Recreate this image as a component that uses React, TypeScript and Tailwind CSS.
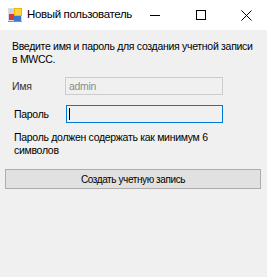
import React from "react";

export default function App() {
  return (
    <div className="w-[267px] h-[277px] bg-[#f0f0f0] flex flex-col overflow-hidden" style={{ fontFamily: '"Liberation Sans", Arial, sans-serif' }}>
      <div className="h-[30px] bg-white flex items-center shrink-0">
        <svg className="ml-[8px] w-[14px] h-[14px] shrink-0" viewBox="0 0 14 14">
          <rect x="0" y="0" width="14" height="14" fill="#d8dce6" />
          <rect x="1" y="1" width="5" height="5" fill="#c9d3e6" />
          <rect x="6" y="0" width="8" height="8" fill="#f5b400" />
          <rect x="7" y="1" width="6" height="6" fill="#ffd24a" />
          <rect x="1" y="6" width="5" height="6" fill="#d83a2e" />
          <rect x="6" y="8" width="7" height="5" fill="#3a78d0" />
          <rect x="0" y="13" width="14" height="1" fill="#8a8fa0" />
        </svg>
        <span className="ml-[5px] text-[11.5px] text-black leading-none whitespace-nowrap tracking-[-0.35px]">Новый пользователь</span>
        <div className="flex-1" />
        <div className="w-[46px] flex justify-center shrink-0">
          <div className="w-[10px] h-px bg-black" />
        </div>
        <div className="w-[46px] flex justify-center shrink-0">
          <div className="w-[10px] h-[10px] border border-black" />
        </div>
        <div className="w-[46px] flex justify-center shrink-0">
          <svg width="11" height="11" viewBox="0 0 11 11">
            <path d="M0.5 0.5 L10.5 10.5 M10.5 0.5 L0.5 10.5" stroke="black" strokeWidth="1" />
          </svg>
        </div>
      </div>
      <div className="flex flex-col text-[10.5px] leading-[13px] text-black tracking-[-0.3px]">
        <p className="mt-[10px] ml-[12px] w-[246px]">Введите имя и пароль для создания учетной записи в MWCC.</p>
        <div className="flex items-center mt-[11px]">
          <span className="ml-[12px] w-[53px] text-[#333]">Имя</span>
          <div className="w-[158px] h-[18px] border border-[#cccccc] bg-[#f0f0f0] flex items-center px-[3px] text-[#8c8c8c]">admin</div>
        </div>
        <div className="flex items-center mt-[10px]">
          <span className="ml-[14px] w-[52px]">Пароль</span>
          <div className="w-[157px] h-[18px] border border-[#0078d7] bg-[#f0f0f0] flex items-center px-[2px]">
            <div className="w-px h-[12px] bg-black" />
          </div>
        </div>
        <p className="mt-[8px] ml-[14px] w-[215px]">Пароль должен содержать как минимум 6 символов</p>
        <button className="mt-[12px] ml-[5px] w-[256px] h-[20px] bg-[#e1e1e1] border border-[#adadad] text-[10px] text-black tracking-[-0.4px]">Создать учетную запись</button>
      </div>
    </div>
  );
}
